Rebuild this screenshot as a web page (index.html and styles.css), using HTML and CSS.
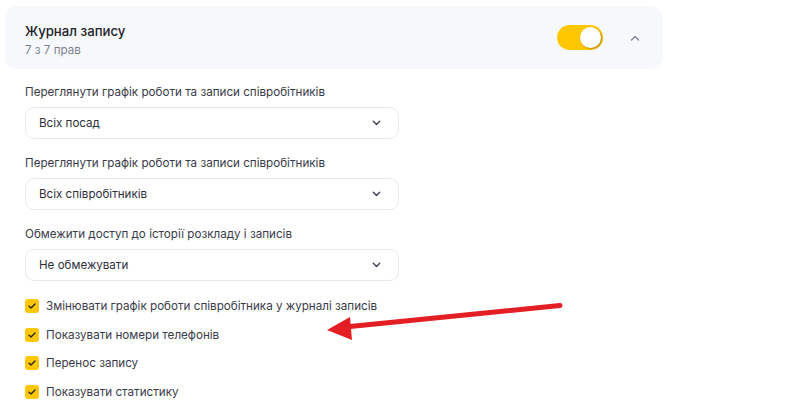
FILE: index.html
```html
<!doctype html>
<html>
<head>
<meta charset="utf-8">
<title>Журнал запису</title>
<link rel="stylesheet" href="styles.css">
</head>
<body>
<div class="wrap">
	<div class="card">
		<div class="card-text">
			<div class="card-title">Журнал запису</div>
			<div class="card-sub">7 з 7 прав</div>
		</div>
		<div class="toggle"><span class="knob"></span></div>
		<svg class="collapse" width="10" height="6" viewBox="0 0 10 6"><path d="M1.5 5 L5 1.5 L8.5 5" fill="none" stroke="#7c8396" stroke-width="1.4" stroke-linecap="round" stroke-linejoin="round"/></svg>
	</div>

	<div class="form">
		<div class="group">
			<div class="label">Переглянути графік роботи та записи співробітників</div>
			<div class="select">
				<span>Всіх посад</span>
				<svg width="9" height="6" viewBox="0 0 9 6"><path d="M1.3 1.3 L4.5 4.4 L7.7 1.3" fill="none" stroke="#3c4154" stroke-width="1.4" stroke-linecap="round" stroke-linejoin="round"/></svg>
			</div>
		</div>
		<div class="group">
			<div class="label">Переглянути графік роботи та записи співробітників</div>
			<div class="select">
				<span>Всіх співробітників</span>
				<svg width="9" height="6" viewBox="0 0 9 6"><path d="M1.3 1.3 L4.5 4.4 L7.7 1.3" fill="none" stroke="#3c4154" stroke-width="1.4" stroke-linecap="round" stroke-linejoin="round"/></svg>
			</div>
		</div>
		<div class="group">
			<div class="label">Обмежити доступ до історії розкладу і записів</div>
			<div class="select">
				<span>Не обмежувати</span>
				<svg width="9" height="6" viewBox="0 0 9 6"><path d="M1.3 1.3 L4.5 4.4 L7.7 1.3" fill="none" stroke="#3c4154" stroke-width="1.4" stroke-linecap="round" stroke-linejoin="round"/></svg>
			</div>
		</div>

		<ul class="checks">
			<li><span class="cb"><svg width="10" height="8" viewBox="0 0 10 8"><path d="M2 4.2 L4 6 L8 2" fill="none" stroke="#2b2b2b" stroke-width="1.5" stroke-linecap="round" stroke-linejoin="round"/></svg></span>Змінювати графік роботи співробітника у журналі записів</li>
			<li><span class="cb"><svg width="10" height="8" viewBox="0 0 10 8"><path d="M2 4.2 L4 6 L8 2" fill="none" stroke="#2b2b2b" stroke-width="1.5" stroke-linecap="round" stroke-linejoin="round"/></svg></span>Показувати номери телефонів</li>
			<li><span class="cb"><svg width="10" height="8" viewBox="0 0 10 8"><path d="M2 4.2 L4 6 L8 2" fill="none" stroke="#2b2b2b" stroke-width="1.5" stroke-linecap="round" stroke-linejoin="round"/></svg></span>Перенос запису</li>
			<li><span class="cb"><svg width="10" height="8" viewBox="0 0 10 8"><path d="M2 4.2 L4 6 L8 2" fill="none" stroke="#2b2b2b" stroke-width="1.5" stroke-linecap="round" stroke-linejoin="round"/></svg></span>Показувати статистику</li>
		</ul>
	</div>

	<!-- стрілка поверх сторінки -->
	<svg class="arrow" width="790" height="412" viewBox="0 0 790 412">
		<line x1="560" y1="305.5" x2="345" y2="327" stroke="#e31e24" stroke-width="5" stroke-linecap="round"/>
		<polygon points="327,330 350,317 352,340" fill="#e31e24"/>
	</svg>
</div>
</body>
</html>
```

FILE: styles.css
```css
*{ margin:0; padding:0; box-sizing:border-box; list-style:none;}
body{ font-family:Inter, "Noto Sans", sans-serif; color:#3a3b4a; background:#fff;}
.wrap{ position:relative; width:790px; height:412px; padding:6px 0 0 5px;}

.card{
	width:658px;
	height:63px;
	background:#f7f8fc;
	border-radius:12px;
	padding:4px 23px 0 20px;
	display:flex;
	align-items:center;
}
.card-text{ flex:1;}
.card-title{ font-size:13.2px; font-weight:500; color:#22232b; line-height:18px;}
.card-sub{ font-size:11.6px; color:#7b7f8c; line-height:16px; margin-top:2px;}
.toggle{
	width:46px;
	height:25px;
	border-radius:13px;
	background:#ffc700;
	position:relative;
	margin-right:27px;
	margin-top:-4px;
}
.knob{
	position:absolute;
	right:2px;
	top:2px;
	width:21px;
	height:21px;
	border-radius:50%;
	background:#fff;
	box-shadow:1px 1px 2px rgba(90,60,0,0.45);
}
.collapse{ display:block; margin-top:-4px;}

.form{ padding:14px 0 0 20px;}
.group{ margin-bottom:15px;}
.label{ font-size:11.65px; line-height:18px; margin-bottom:6px;}
.select{
	width:374px;
	height:32px;
	border:1px solid #e6e8ef;
	border-radius:9px;
	padding:0 17px 0 13px;
	display:flex;
	align-items:center;
	justify-content:space-between;
	font-size:11.6px;
	color:#2e2f3c;
}
.select svg{ display:block;}

.checks{ margin-top:0; display:flex; flex-direction:column; gap:8.5px;}
.checks li{
	height:20px;
	display:flex;
	align-items:center;
	font-size:11.65px;
}
.cb{
	width:14px;
	height:14px;
	border-radius:3px;
	background:#ffc700;
	display:flex;
	align-items:center;
	justify-content:center;
	margin-right:7px;
}
.cb svg{ display:block;}

.arrow{ position:absolute; left:0; top:0; pointer-events:none;}
```
